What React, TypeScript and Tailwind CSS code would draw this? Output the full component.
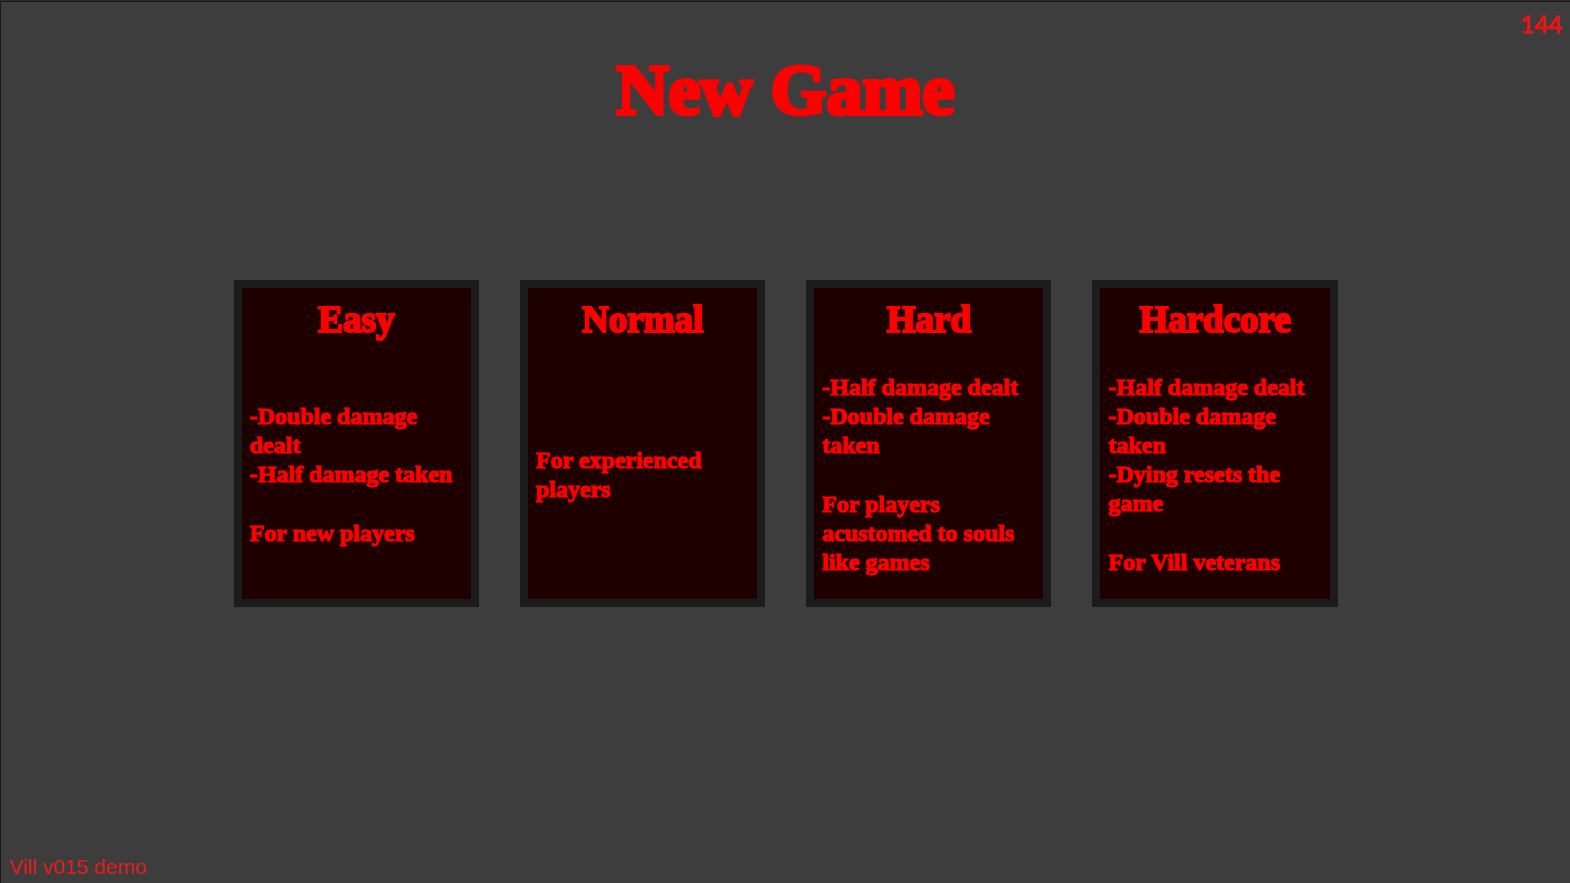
interface Difficulty {
  name: string
  effects: string[]
  audience: string
}

const difficulties: Difficulty[] = [
  {
    name: 'Easy',
    effects: ['-Double damage dealt', '-Half damage taken'],
    audience: 'For new players',
  },
  {
    name: 'Normal',
    effects: [],
    audience: 'For experienced players',
  },
  {
    name: 'Hard',
    effects: ['-Half damage dealt', '-Double damage taken'],
    audience: 'For players acustomed to souls like games',
  },
  {
    name: 'Hardcore',
    effects: ['-Half damage dealt', '-Double damage taken', '-Dying resets the game'],
    audience: 'For Vill veterans',
  },
]

const DifficultyCard = ({ name, effects, audience }: Difficulty) => (
  <button
    type="button"
    className="flex min-h-[327px] cursor-pointer flex-col border-8 border-[#1c1c1c] bg-[#1e0000] px-2 pt-2 text-left"
  >
    <span className="block w-full text-center text-[37px] leading-[48px] [-webkit-text-stroke:2px_#ff0000]">
      {name}
    </span>
    <span className="flex w-full flex-1 flex-col justify-center pt-1.5 text-2xl leading-[29px] [-webkit-text-stroke:1px_#ff0000]">
      {effects.map((effect) => (
        <span key={effect} className="block">
          {effect}
        </span>
      ))}
      <span className={effects.length > 0 ? 'mt-[30px] block' : 'block'}>{audience}</span>
    </span>
  </button>
)

const App = () => {
  return (
    <div className="flex min-h-screen flex-col border-t border-[#2d2d2d] bg-[#3d3d3d] font-['Liberation_Serif',serif] font-bold text-[#ff0000]">
      <div className="flex flex-1 flex-col border-t border-l border-[#1a1a1a]">
        <header className="relative pt-11">
          <h1 className="text-center text-7xl leading-[88px] [-webkit-text-stroke:4px_#ff0000]">
            New Game
          </h1>
          <span className="absolute top-1 right-2 font-['Lato',sans-serif] text-2xl leading-9 font-normal text-[#e81414] [-webkit-text-stroke:1px_#e81414]">
            144
          </span>
        </header>

        <main className="mx-auto mt-[146px] grid w-full max-w-[1104px] grid-cols-4 gap-[41px]">
          {difficulties.map((difficulty) => (
            <DifficultyCard key={difficulty.name} {...difficulty} />
          ))}
        </main>

        <footer className="mt-auto px-2 pb-1 font-['Liberation_Sans',sans-serif] text-[21px] leading-6 font-normal text-[#e01c1c]">
          Vill v015 demo
        </footer>
      </div>
    </div>
  )
}

export default App
